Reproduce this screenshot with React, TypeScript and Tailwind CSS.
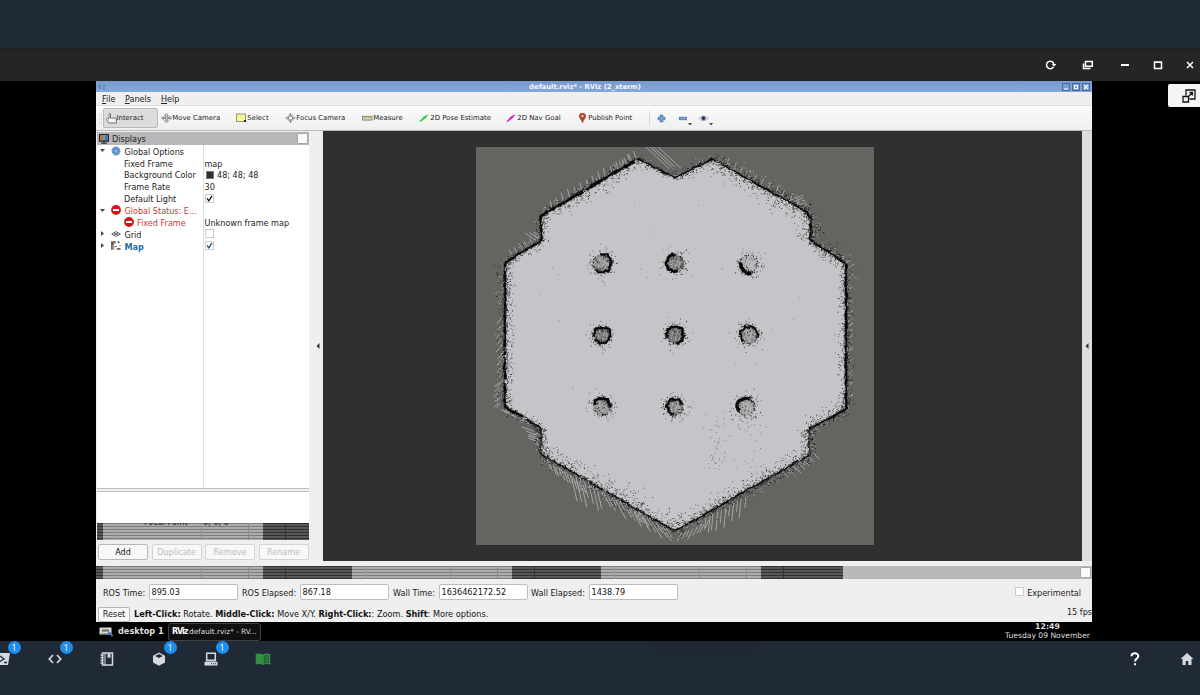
import React from "react";

type Pt = [number, number];

function makeRandom(seed: number) {
  let s = seed;
  return () => {
    s = (s * 1664525 + 1013904223) >>> 0;
    return s / 4294967296;
  };
}
const rnd = makeRandom(4217);
const gauss = () => (rnd() + rnd() + rnd() + rnd() - 2) * 1.1;

// Map coordinates are local to the 398 x 398 occupancy grid.
const outline: Pt[] = [
  [162, 12], [199, 31], [236, 12], [331, 65], [335, 72], [334, 93], [370, 117],
  [370, 262], [333, 282], [333, 308], [199, 384], [65, 307], [65, 281],
  [29, 260], [29, 116], [65, 94], [65, 69],
];
// per edge: stroke, inner spread, outer spread, density
const edges: [number, number, number, number][] = [
  [1.5, 4, 4, 3.5], [1.6, 4, 6, 5], [1.4, 10, 8, 9], [2.2, 10, 6, 12], [2, 10, 9, 12], [2.2, 6, 8, 9],
  [2.4, 6, 6, 6.5], [1.8, 9, 5, 8], [0.3, 6, 5, 13], [1.5, 9, 6, 9], [1.1, 11, 7, 9], [0.8, 6, 5, 11],
  [2.3, 4, 5, 6], [2.3, 7, 7, 7], [2.1, 5, 5, 6], [2.2, 5, 5, 8], [2.8, 8, 5, 6.5],
];
const px = (x: number, y: number, s = 1) => `M${x.toFixed(1)} ${y.toFixed(1)}h${s}v${s}h-${s}z`;

let black = "";
let gray = "";
let light = "";
const walls: { d: string; w: number }[] = [];
outline.forEach((a, i) => {
  const b = outline[(i + 1) % outline.length];
  const [w, inn, out, dens] = edges[i];
  const dx = b[0] - a[0];
  const dy = b[1] - a[1];
  const len = Math.hypot(dx, dy);
  const nx = -dy / len;
  const ny = dx / len;
  const steps = Math.max(2, Math.round(len / 4));
  let x0 = a[0];
  let y0 = a[1];
  for (let k = 1; k <= steps; k++) {
    const t = k / steps;
    const x1 = a[0] + dx * t + gauss() * 0.6;
    const y1 = a[1] + dy * t + gauss() * 0.6;
    if (rnd() > 0.08) {
      walls.push({
        d: `M${x0.toFixed(1)} ${y0.toFixed(1)}L${x1.toFixed(1)} ${y1.toFixed(1)}`,
        w: Number((w * (0.55 + rnd() * 0.7)).toFixed(2)),
      });
    }
    x0 = x1;
    y0 = y1;
  }
  for (let k = 0; k < len * 1.6; k++) {
    const t = rnd();
    const o = gauss() * (1.2 + w * 0.35);
    black += px(a[0] + dx * t + nx * o - 0.5, a[1] + dy * t + ny * o - 0.5);
  }
  for (let k = 0; k < len * dens * 0.45; k++) {
    const t = rnd();
    const g = gauss();
    const o = g > 0 ? g * inn : g * out;
    const x = a[0] + dx * t + nx * o;
    const y = a[1] + dy * t + ny * o;
    const r = rnd();
    if (r < 0.34) black += px(x, y, 0.9);
    else if (g < 0 && r < 0.75) light += px(x, y);
    else gray += px(x, y);
  }
});

// center, radius, arc start/end in degrees, arc width, fill opacity
const pillars: [number, number, number, number, number, number, number][] = [
  [126, 116, 9, -100, 130, 2, 0.45], [199, 116, 8.5, 70, 275, 2.4, 0.6], [273, 117, 9, 75, 195, 3, 0.15],
  [126, 188, 8, -190, 150, 1.9, 0.75], [199, 188, 8.5, -200, 80, 2.1, 0.8], [273, 188, 8.5, -225, 25, 1.6, 0.4],
  [126, 260, 8.5, -165, 10, 2.4, 0.4], [199, 260, 8, 100, 340, 1.9, 0.5], [270, 260, 9, 150, 300, 2.7, 0.3],
];
const arcs = pillars.map(([cx, cy, r, s, e, w, o]) => {
  let d = "";
  for (let q = s; q <= e; q += 14) {
    const a = (q * Math.PI) / 180;
    const rr = r + gauss() * 1.1;
    d += `${d ? "L" : "M"}${(cx + Math.cos(a) * rr).toFixed(1)} ${(cy + Math.sin(a) * rr).toFixed(1)}`;
  }
  for (let k = 0; k < 60; k++) {
    const a = ((s + rnd() * (e - s)) * Math.PI) / 180;
    const rr = r + gauss() * 1.8;
    black += px(cx + Math.cos(a) * rr - 0.5, cy + Math.sin(a) * rr - 0.5, 1.1);
  }
  for (let k = 0; k < 40; k++) {
    const a = rnd() * Math.PI * 2;
    black += px(cx + Math.cos(a) * (r + gauss()) - 0.5, cy + Math.sin(a) * (r + gauss()) - 0.5, 0.9);
  }
  for (let k = 0; k < 110; k++) {
    const a = rnd() * Math.PI * 2;
    const rr = r + gauss() * 5 + (rnd() < 0.15 ? 5 : 0);
    const p = px(cx + Math.cos(a) * rr, cy + Math.sin(a) * rr, 0.9);
    if (rnd() < 0.35) black += p;
    else gray += p;
  }
  return { d, w, cx, cy, r, o };
});
for (let k = 0; k < 55; k++) gray += px(225 + rnd() * 65, 262 + rnd() * 62, 0.8);
for (let k = 0; k < 30; k++) gray += px(242 + gauss() * 7, 278 + rnd() * 45, 0.8);
for (let k = 0; k < 25; k++) gray += px(60 + rnd() * 280, 50 + rnd() * 270, 0.8);

// x, y, step x, step y, ray dx, ray dy, count, jitter
const rays: [number, number, number, number, number, number, number, number][] = [
  [170, 0, 3, -1, 27, 25, 4, 3], [327, 47, 0, 3, -22, 9, 6, 4], [49, 86, 4, -1, 14, 9, 4, 4],
  [36, 108, 5, -3, -4, -7, 7, 4], [75, 60, 6, -3.5, -2, -8, 14, 4], [342, 102, 5, 3, 8, -5, 7, 5],
  [26, 170, 0, 7, -7, 8, 13, 4], [40, 266, 4, 2, -17, -4, 8, 6], [58, 284, 2, 3, -14, -5, 6, 5],
  [70, 312, 3, 2, 4, 12, 13, 5], [95, 327, 4, 1.5, 7, 30, 7, 7], [126, 344, 4, 2, 13, 24, 10, 9],
  [157, 362, 4, 2, 16, 26, 9, 9], [205, 386, 4, -2, -6, 12, 8, 8], [229, 371, 4, -2.2, -2, 20, 11, 8],
  [305, 323, 5, -3, 10, 9, 7, 5], [23, 235, 0, 5, -6, 5, 5, 4], [140, 22, 5, -2.8, -3, -7, 5, 3],
  [250, 17, 7, 4, 3, -7, 11, 4], [373, 130, 0, 12, 4, -3, 11, 3],
];
let rayPath = "";
rays.forEach(([x, y, sx, sy, rx, ry, n, j]) => {
  for (let k = 0; k < n; k++) {
    const f = 1 - (rnd() * j) / 15;
    rayPath += `M${(x + sx * k + rnd()).toFixed(1)} ${(y + sy * k + rnd()).toFixed(1)}l${(rx * f).toFixed(1)} ${(ry * f).toFixed(1)}`;
  }
});

function OccupancyMap() {
  return (
    <svg width="398" height="398" viewBox="0 0 398 398" className="block overflow-hidden bg-[#636561]">
      <path d={`M${outline.map((p) => p.join(" ")).join("L")}z`} fill="#c6c4c8" />
      <path d={rayPath} stroke="#b5b5b5" strokeWidth="0.9" fill="none" opacity="0.9" />
      {arcs.map((p, i) => (
        <g key={i}>
          <circle cx={p.cx} cy={p.cy} r={p.r} fill="#666864" opacity={p.o} />
          <path d={`M${p.cx - 4} ${p.cy + 4}l2-9M${p.cx} ${p.cy + 6}l3-11M${p.cx + 4} ${p.cy + 5}l1-7`} stroke="#c6c4c8" strokeWidth=".6" />
        </g>
      ))}
      <path d={light} fill="#b9b9b9" opacity="0.8" />
      <path d={gray} fill="#4d4d4b" opacity="0.75" />
      <path d={black} fill="#080808" opacity="0.85" />
      {walls.map((l, i) => (
        <path key={i} d={l.d} stroke="#050505" strokeWidth={l.w} fill="none" />
      ))}
      {arcs.map((p, i) => (
        <path key={i} d={p.d} stroke="#070707" strokeWidth={p.w} fill="none" />
      ))}
    </svg>
  );
}

function Gear() {
  return (
    <svg width="10" height="10" viewBox="0 0 10 10">
      <circle cx="5" cy="5" r="3.9" fill="#6d9fd3" stroke="#4779b3" strokeWidth="1.1" strokeDasharray="1.3 .7" />
      <circle cx="5" cy="5" r="1.6" fill="#9fc3e8" stroke="#4b80bc" strokeWidth=".7" />
    </svg>
  );
}
function StopIcon() {
  return (
    <svg width="10" height="10" viewBox="0 0 10 10">
      <circle cx="5" cy="5" r="4.9" fill="#d5151b" />
      <rect x="2" y="4" width="6" height="2" fill="#fff" />
    </svg>
  );
}
function Monitor() {
  return (
    <svg width="10" height="10" viewBox="0 0 10 10">
      <rect width="10" height="7.7" rx=".6" fill="#222" />
      <rect x="1" y="1" width="2.7" height="5.5" fill="#d9676d" />
      <rect x="3.7" y="1" width="2.7" height="5.5" fill="#58c06c" />
      <rect x="6.4" y="1" width="2.6" height="5.5" fill="#6e66d9" />
      <path d="M4 7h2v1.7h2v1H2v-1h2z" fill="#333" />
    </svg>
  );
}
function GridIcon() {
  return (
    <svg width="10" height="10" viewBox="0 0 10 10" fill="none" stroke="#555" strokeWidth=".9">
      <path d="M.7 5L5 2.6 9.3 5 5 7.4zM2.8 3.8l4.3 2.4M7.2 3.8L2.8 6.2" />
    </svg>
  );
}
function MapIcon() {
  return (
    <svg width="11" height="10" viewBox="0 0 11 10" fill="#666">
      <path d="M0 0h5v2H3v2H2v5H0zM7 0h2v2H7zM4 5h2v1H4zM6 7h4v2H6zM9 4h1v1H9z" />
      <path d="M2 4h2v5H2z" fill="#bbb" />
    </svg>
  );
}

function Check({ on, blue }: { on?: boolean; blue?: boolean }) {
  return (
    <span className="flex h-[9px] w-[9px] shrink-0 items-center justify-center border border-[#cccccc] bg-white">
      {on && (
        <svg width="7" height="7" viewBox="0 0 7 7" fill="none" stroke={blue ? "#1e4f86" : "#111"} strokeWidth="1.3">
          <path d="M1 3.4L2.8 5.8 6 .8" />
        </svg>
      )}
    </span>
  );
}

type Row = {
  arrow?: "down" | "right";
  icon?: React.ReactNode;
  pad: string;
  label: string;
  tone?: string;
  swatch?: boolean;
  text?: string;
  check?: React.ReactNode;
};
const rows: Row[] = [
  { arrow: "down", icon: <Gear />, pad: "pl-[5px]", label: "Global Options" },
  { pad: "pl-[18px]", label: "Fixed Frame", text: "map" },
  { pad: "pl-[18px]", label: "Background Color", swatch: true, text: "48; 48; 48" },
  { pad: "pl-[18px]", label: "Frame Rate", text: "30" },
  { pad: "pl-[18px]", label: "Default Light", check: <Check on /> },
  { arrow: "down", icon: <StopIcon />, pad: "pl-[5px]", label: "Global Status: E...", tone: "text-[#c8383d]" },
  { icon: <StopIcon />, pad: "pl-[17.5px]", label: "Fixed Frame", tone: "text-[#c8383d]", text: "Unknown frame map" },
  { arrow: "right", icon: <GridIcon />, pad: "pl-[5px]", label: "Grid", check: <Check /> },
  { arrow: "right", icon: <MapIcon />, pad: "pl-[5px]", label: "Map", tone: "font-bold text-[#1b6dab]", check: <Check on blue /> },
];

function Tree() {
  return (
    <div className="h-[344px] border-b border-[#c0c0c0] bg-white bg-[linear-gradient(to_right,transparent_106px,#dddddd_106px,#dddddd_107px,transparent_107px)]">
      {rows.map((r, i) => (
        <div key={i} className="flex h-[11.86px] items-center">
          <div className="flex w-[107px] items-center">
            <span className="flex w-[8px] shrink-0 justify-end">
              {r.arrow && (
                <svg width="5" height="5" viewBox="0 0 5 5" className="shrink-0" fill="#444">
                  <path d={r.arrow === "down" ? "M0 1h5L2.5 4z" : "M1 0v5L4 2.5z"} />
                </svg>
              )}
            </span>
            <span className={`ml-px flex items-center whitespace-nowrap ${r.pad} ${r.tone ?? ""}`}>
              {r.icon && <span className="mr-[3px] flex w-[10.5px] shrink-0">{r.icon}</span>}
              <span className="pt-[1.6px]">{r.label}</span>
            </span>
          </div>
          <div className="flex items-center pl-[0.5px]">
            {r.swatch && <span className="mr-[3px] ml-[1.5px] h-[8px] w-[8px] border border-[#777] bg-[#303030]" />}
            {r.text && <span className="pt-[1.6px]">{r.text}</span>}
            {r.check}
          </div>
        </div>
      ))}
    </div>
  );
}

function Glitch({ parts }: { parts: [boolean, string][] }) {
  return (
    <div className="flex h-full w-full">
      {parts.map(([dark, w], i) => (
        <div
          key={i}
          className={`${w} ${
            dark
              ? "bg-[linear-gradient(to_right,transparent_22px,#333_22px,#333_23px,transparent_23px),repeating-linear-gradient(to_bottom,#303030_0px,#303030_1px,#5c5c5c_1px,#545454_3px)]"
              : "bg-[linear-gradient(to_right,transparent_14px,#999_14px,#999_15px,transparent_15px,transparent_98px,#8e8e8e_98px,#8e8e8e_99px,transparent_99px,transparent_145px,#888_145px,#888_146px,transparent_146px),repeating-linear-gradient(to_bottom,#7c7c7c_0px,#7c7c7c_1px,#b2b2b2_1px,#a8a8a8_3px)]"
          }`}
        />
      ))}
    </div>
  );
}

function PanelButton({ label, off }: { label: string; off?: boolean }) {
  return (
    <div
      className={`flex h-[16px] w-[50px] items-center justify-center rounded-[2px] border bg-[#f8f8f8] pt-px ${
        off ? "border-[#d4d4d4] text-[#bdbdbd]" : "border-[#b7b7b7] text-[#111]"
      }`}
    >
      {label}
    </div>
  );
}

function Displays() {
  return (
    <div className="w-[213px] shrink-0 pl-px">
      <div className="mt-px flex h-[13px] items-center bg-[#b9b7b9] pl-[2px]">
        <Monitor />
        <span className="ml-[3px] flex-1 pt-[1.5px]">Displays</span>
        <span className="mr-[1px] h-[11px] w-[11px] rounded-[1px] border border-[#a5a5a5] bg-[#fbfbfb]" />
      </div>
      <Tree />
      <div className="mt-[2px] h-[32px] border-t border-[#bdbdbd] bg-white" />
      <div className="h-[17px]">
        <div className="h-[17px] w-[212px]">
          <Glitch parts={[[true, "w-[6px]"], [false, "w-[160px]"], [true, "w-[46px]"]]} />
        </div>
        <div className="relative -mt-[17px] ml-[47px] flex h-[3px] w-[85px] justify-between overflow-hidden text-[#222]">
          <span className="-mt-[5px] leading-[8px]">Focal Point</span>
          <span className="-mt-[5px] leading-[8px]">0; 0; 0</span>
        </div>
      </div>
      <div className="mt-[4px] flex gap-[3.5px] pl-px">
        <PanelButton label="Add" />
        <PanelButton label="Duplicate" off />
        <PanelButton label="Remove" off />
        <PanelButton label="Rename" off />
      </div>
    </div>
  );
}

const tools: { w: string; label: string; icon: React.ReactNode }[] = [
  {
    w: "w-[75px]",
    label: "Move Camera",
    icon: (
      <svg width="11" height="10" viewBox="0 0 11 10" fill="#ddd" stroke="#777" strokeWidth=".8">
        <path d="M5.5.5l2 2H6.3v2H9v-1l1.500 1.500L9 6.500v-1H6.300v2.200h1.200l-2 2-2-2h1.200V5.500H2v1L.5 5 2 3.500v1h2.700v-2H3.500z" />
      </svg>
    ),
  },
  {
    w: "w-[49px]",
    label: "Select",
    icon: (
      <svg width="11" height="10" viewBox="0 0 11 10">
        <rect x=".5" y="1" width="9" height="7.500" fill="#f7f1a0" stroke="#81815d" strokeWidth=".8" />
        <path d="M8 7h2v2H8z" fill="#222" />
      </svg>
    ),
  },
  {
    w: "w-[77px]",
    label: "Focus Camera",
    icon: (
      <svg width="11" height="10" viewBox="0 0 11 10" fill="none" stroke="#888" strokeWidth="1">
        <path d="M5.500 .5L10 5 5.500 9.500 1 5z" fill="#ddd" strokeWidth=".7" strokeDasharray="1.500 .6" />
        <circle cx="5.500" cy="5" r="2.200" fill="#f5f5f5" />
        <path d="M5.500 0v3.500M5.500 6.500V10M.5 5H4M7 5h3.500" />
      </svg>
    ),
  },
  {
    w: "w-[57px]",
    label: "Measure",
    icon: (
      <svg width="11" height="10" viewBox="0 0 11 10">
        <rect x=".5" y="3.300" width="9.500" height="3.800" fill="#d5d2a4" stroke="#85836d" strokeWidth=".8" />
        <path d="M2.500 3.500v1.500M4.500 3.500v1.500M6.500 3.500v1.500M8.500 3.500v1.500" stroke="#85836d" strokeWidth=".5" />
      </svg>
    ),
  },
  {
    w: "w-[87px]",
    label: "2D Pose Estimate",
    icon: (
      <svg width="11" height="10" viewBox="0 0 11 10" fill="#23d63a">
        <path d="M.5 8.200L4 4.500l1-.9L9.500 1 6.800 5l-1.300 1L1.500 9z" />
      </svg>
    ),
  },
  {
    w: "w-[71px]",
    label: "2D Nav Goal",
    icon: (
      <svg width="11" height="10" viewBox="0 0 11 10" fill="#d91bc0">
        <path d="M.5 8.200L4 4.500l1-.9L9.500 1 6.800 5l-1.300 1L1.500 9z" />
      </svg>
    ),
  },
  {
    w: "w-[72px]",
    label: "Publish Point",
    icon: (
      <svg width="11" height="10" viewBox="0 0 11 10">
        <path d="M5.500 0C3.500 0 2.300 1.400 2.300 3.200c0 2.300 2.500 3.400 3.200 6.600.7-3.200 3.200-4.300 3.200-6.600C8.700 1.400 7.500 0 5.500 0z" fill="#b84224" stroke="#77301c" strokeWidth=".5" />
        <circle cx="5.500" cy="3" r="1.200" fill="#f2c9b5" />
      </svg>
    ),
  },
];

function Caret() {
  return (
    <svg width="4" height="3" viewBox="0 0 4 3" className="mt-[13px] shrink-0">
      <path d="M0 0h4L2 2.500z" fill="#444" />
    </svg>
  );
}

function Toolbar() {
  return (
    <div className="flex h-[25px] items-center border-b border-[#bcbcbc] bg-gradient-to-b from-[#fbfbfb] to-[#efefef] text-[6.92px] text-[#222]">
      <div className="ml-[3px] h-[11px] w-[3px] border-x border-dotted border-[#ccc]" />
      <div className="ml-px flex h-[20px] w-[55px] items-center rounded-[2px] border border-[#bababa] bg-[#dcdcdc] pl-[1.5px]">
        <svg width="11" height="11" viewBox="0 0 11 11" fill="#f5f5f5" stroke="#555" strokeWidth=".8">
          <path d="M3 6V1.300c0-1 1.500-1 1.500 0V5h4.700c.8 0 1.200.4 1.200 1v4H3L.5 6.500C.2 5.500 1.500 5 2 5.500z" />
        </svg>
        <span className="pt-[1.5px]">Interact</span>
      </div>
      <div className="ml-[3px] flex">
        {tools.map((t) => (
          <div key={t.label} className={`flex items-center whitespace-nowrap ${t.w}`}>
            {t.icon}
            <span className="pt-[1.5px] pl-[0.3px]">{t.label}</span>
          </div>
        ))}
      </div>
      <div className="flex h-[14px] items-center border-l border-[#d4d4d4] pl-[7px]">
        <svg width="9" height="9" viewBox="0 0 9 9" className="mr-[13px]">
          <path d="M3.200 1h2.600v2.200H8v2.600H5.800V8H3.200V5.800H1V3.200h2.200z" fill="#74a3d6" stroke="#3e6ba0" strokeWidth=".7" />
        </svg>
        <svg width="8" height="9" viewBox="0 0 8 9">
          <rect x=".4" y="3.200" width="7.200" height="2.600" fill="#74a3d6" stroke="#3e6ba0" strokeWidth=".7" />
        </svg>
        <span className="flex pl-[1px]">
          <Caret />
        </span>
        <svg width="11" height="9" viewBox="0 0 11 9" className="ml-[6px]">
          <path d="M.5 4.500Q5.500-.5 10.500 4.500 5.500 9 .5 4.500z" fill="#eceef3" stroke="#aaa" strokeWidth=".7" />
          <circle cx="5.500" cy="4.300" r="2.200" fill="#49659a" />
          <circle cx="5.500" cy="4.300" r="1" fill="#111" />
        </svg>
        <Caret />
      </div>
    </div>
  );
}

function TimeField({ label, labelW, value }: { label: string; labelW: string; value: string }) {
  return (
    <>
      <span className={`pt-[1.5px] whitespace-nowrap ${labelW}`}>{label}</span>
      <span className="flex h-[16px] w-[89px] items-center rounded-[2px] border border-[#bdbdbd] bg-white pt-px pl-[1.5px] text-[8.15px] text-[#111]">
        {value}
      </span>
    </>
  );
}

function RvizWindow() {
  return (
    <div className="flex h-[541px] flex-col bg-[#efefef] text-[8.08px] leading-none text-[#222]">
      <div className="flex h-[11px] items-center bg-gradient-to-b from-[#799bce] to-[#82a8dc] px-[2px]">
        <span className="flex w-[32px]">
          <svg width="8" height="6" viewBox="0 0 8 6" className="opacity-60" fill="none" stroke="#4b6488" strokeWidth=".8">
            <path d="M1 1v4M1 1h2v2H1l2 2M5 1h2L5 5h2" />
          </svg>
        </span>
        <div className="flex-1 pt-px pr-[22px] text-center text-[6.83px] font-bold text-[#f4f7fc]">default.rviz* - RViz (2_xterm)</div>
        <div className="flex w-[28px] gap-[2px]">
          {["M1 5h4", "M1.500 1.500h3v3h-3z", "M1 1l4 4M5 1L1 5"].map((d) => (
            <svg key={d} width="8" height="8" viewBox="-1 -1 8 8" fill="none" stroke="#edf3fc" strokeWidth="1.200">
              <rect x="-.5" y="-.5" width="7" height="7" fill="#7b9fd3" stroke="#41659b" strokeWidth=".9" />
              <path d={d} />
            </svg>
          ))}
        </div>
      </div>
      <div className="flex h-[14px] items-center border-b border-[#dedede] pt-[2px] pl-[6px]">
        {[["F", "ile", "w-[23px]"], ["P", "anels", "w-[36px]"], ["H", "elp", "w-[30px]"]].map(([a, b, w]) => (
          <span key={b} className={w}>
            <span className="underline underline-offset-1">{a}</span>
            {b}
          </span>
        ))}
      </div>
      <Toolbar />
      <div className="flex h-[430px]">
        <Displays />
        <div className="flex w-[14px] items-center justify-center">
          <svg width="4" height="6" viewBox="0 0 4 6" className="ml-[4px]">
            <path d="M3.500 0v6L.5 3z" fill="#333" />
          </svg>
        </div>
        <div className="flex w-[759px] bg-[#303030] pt-[16px] pl-[153px]">
          <OccupancyMap />
        </div>
        <div className="flex w-[10px] items-center justify-center bg-[#dddddd]">
          <svg width="4" height="6" viewBox="0 0 4 6">
            <path d="M3.500 0v6L.5 3z" fill="#333" />
          </svg>
        </div>
      </div>
      <div className="mt-[5px] flex h-[13px] bg-[#bab8ba]">
        <div className="w-[747px]">
          <Glitch
            parts={[
              [true, "w-[7px]"], [false, "w-[160px]"], [true, "w-[89px]"], [false, "w-[160px]"],
              [true, "w-[89px]"], [false, "w-[160px]"], [true, "w-[82px]"],
            ]}
          />
        </div>
        <span className="mt-px mr-[1px] ml-auto h-[11px] w-[11px] rounded-[1px] border border-[#a8a8a8] bg-[#fbfbfb]" />
      </div>
      <div className="mt-[5px] flex h-[16px] items-center pl-[7px]">
        <TimeField label="ROS Time:" labelW="w-[46px]" value="895.03" />
        <TimeField label="ROS Elapsed:" labelW="w-[58px] ml-[4px]" value="867.18" />
        <TimeField label="Wall Time:" labelW="w-[46px] ml-[4px]" value="1636462172.52" />
        <TimeField label="Wall Elapsed:" labelW="w-[58px] ml-[3px]" value="1438.79" />
        <span className="mr-[11px] ml-auto flex items-center gap-[3px]">
          <Check />
          <span className="pt-[1.5px]">Experimental</span>
        </span>
      </div>
      <div className="mt-[6px] flex h-[16px] items-center pl-[2px]">
        <span className="mr-[4px] flex h-[15px] w-[32px] items-center justify-center rounded-[2px] border border-[#b7b7b7] bg-[#fafafa] pt-px">
          Reset
        </span>
        <span className="pt-px text-[8.16px] whitespace-pre text-[#111]">
          <b>Left-Click:</b> Rotate. <b>Middle-Click:</b> Move X/Y. <b>Right-Click:</b>: Zoom. <b>Shift</b>: More options.
        </span>
        <span className="mb-[4px] ml-auto">15 fps</span>
      </div>
    </div>
  );
}

function Taskbar() {
  return (
    <div className="flex h-[19px] items-center bg-black pl-[3px] leading-none text-[#dedede]">
      <svg width="14" height="11" viewBox="0 0 14 11">
        <path d="M.5 1.500h12v7H.5z" fill="#d9d9d9" />
        <path d="M3 3.500h7v2H3z" fill="#666" />
        <path d="M2 7h8v1H2z" fill="#999" />
        <path d="M9.500 6l4 4" stroke="#4779bd" strokeWidth="1.800" />
      </svg>
      <b className="ml-[5px] w-[50px] text-[8.2px]">desktop 1</b>
      <div className="flex h-[18px] w-[93px] items-center rounded-[3px] border border-[#414141] bg-[#101010] pl-[3px] text-[7.3px] whitespace-nowrap">
        <b className="w-[17px] text-[8px] tracking-[-1.1px] text-white">RViz</b>
        default.rviz* - RV...
      </div>
      <div className="mr-[2px] ml-auto flex flex-col items-center gap-[1px]">
        <b className="text-[7.8px]">12:49</b>
        <span className="text-[7.62px]">Tuesday 09 November</span>
      </div>
    </div>
  );
}

const dock: { badge?: boolean; icon: React.ReactNode }[] = [
  {
    badge: true,
    icon: (
      <svg width="16" height="14" viewBox="0 0 16 14">
        <path d="M3 1h12l-2 12H1z" fill="#d5d9df" />
        <path d="M5 4l4 3-5 3M9 10.500h3" stroke="#202a38" strokeWidth="1.300" fill="none" />
      </svg>
    ),
  },
  {
    badge: true,
    icon: (
      <svg width="14" height="14" viewBox="0 0 14 14" fill="none" stroke="#d5d9df" strokeWidth="1.700">
        <path d="M5 3L1.300 7 5 11M9 3l3.700 4L9 11" />
      </svg>
    ),
  },
  {
    icon: (
      <svg width="14" height="14" viewBox="0 0 14 14">
        <path d="M2.500 1h10v12h-10z" fill="none" stroke="#d5d9df" strokeWidth="1.500" />
        <path d="M5 1v12" stroke="#d5d9df" />
        <path d="M7.500 1.500h3v5L9 5 7.500 6.500z" fill="#d5d9df" />
        <path d="M.5 3h3M.5 5.700h3M.5 8.300h3M.5 11h3" stroke="#d5d9df" strokeWidth="1.300" />
      </svg>
    ),
  },
  {
    badge: true,
    icon: (
      <svg width="14" height="14" viewBox="0 0 14 14">
        <path d="M7 .5l6 3.200v6.700L7 13.700 1 10.400V3.700z" fill="#d5d9df" />
        <path d="M7 2l3.800 2L7 6 3.200 4z" fill="#202a38" />
      </svg>
    ),
  },
  {
    badge: true,
    icon: (
      <svg width="14" height="14" viewBox="0 0 14 14">
        <path d="M2.700 1.300h8.600v7H2.700z" fill="none" stroke="#d5d9df" strokeWidth="1.500" />
        <path d="M1.500 9.500h11l1 1v3H.5v-3z" fill="#d5d9df" />
        <path d="M7 11.700h1M9 11.700h1M11 11.700h1" stroke="#202a38" />
      </svg>
    ),
  },
  {
    icon: (
      <svg width="16" height="14" viewBox="0 0 16 14">
        <path d="M.7 2Q5 1 8 2.500 11 1 15.300 2v10.500Q11 11.500 8 13 5 11.500.7 12.500z" fill="#329140" />
        <path d="M8.800 3.800Q11 2.800 14 3.200v7.800Q11 10.500 8.800 11.800z" fill="#26603a" />
        <path d="M10 5h3.200M10 7h3.200M10 9h3.200" stroke="#329140" strokeWidth="1" />
      </svg>
    ),
  },
];

function Dock() {
  return (
    <div className="flex h-[54px] items-start bg-[#202a36]">
      <div className="-ml-[23.5px] flex">
        {dock.map((d, i) => (
          <div key={i} className="relative flex h-[36px] w-[52px] items-center justify-center">
            {d.icon}
            {d.badge && (
              <span className="absolute top-[0px] left-[31px] flex h-[13px] w-[13px] items-center justify-center rounded-full bg-[#1e8dec] font-['Open_Sans'] text-[9px] leading-none text-white">
                1
              </span>
            )}
          </div>
        ))}
      </div>
      <div className="ml-[364.5px] h-[10px] w-[106px] bg-[#1e2733]" />
      <div className="ml-auto flex h-[36px] items-center">
        <svg width="10" height="14" viewBox="0 0 10 14" className="mr-[40px]">
          <path d="M1.500 4.200C1.500.4 8.300.3 8.300 4.200c0 2.200-3.300 2.700-3.300 5.300" stroke="#fff" strokeWidth="2" fill="none" />
          <path d="M4 11.300h2v2H4z" fill="#fff" />
        </svg>
        <svg width="14" height="14" viewBox="0 0 14 14" className="mr-[6px]">
          <path d="M7 1l6.500 6h-2v6H8.300V9H5.700v4H2.500V7h-2z" fill="#d5d9df" />
        </svg>
      </div>
    </div>
  );
}

const chrome: { w: string; icon: React.ReactNode }[] = [
  {
    w: "w-[40px]",
    icon: (
      <>
        <path d="M9.800 5A3.700 3.700 0 1 0 9.300 8" />
        <path d="M7.800 5h4.400L10 7.800z" fill="#fff" stroke="none" />
      </>
    ),
  },
  { w: "w-[36px]", icon: <path d="M3.500 2.500h6.800v4.800H3.500zM1.500 4.500v5h7" /> },
  { w: "w-[38px]", icon: <path d="M2 6h8" strokeWidth="2" /> },
  { w: "w-[28px]", icon: <path d="M2.500 3h7v6.500h-7zM2.500 3.300h7" /> },
  { w: "w-[37px]", icon: <path d="M3 3l6 6M9 3L3 9" /> },
];

export default function App() {
  return (
    <div className="flex h-[695px] w-[1200px] flex-col overflow-hidden bg-black font-['DejaVu_Sans',sans-serif]">
      <div className="h-[49px] border-b border-[#18202a] bg-[#202a36]" />
      <div className="flex h-[32px] items-center justify-end bg-[#252525]">
        <div className="-mr-[8.5px] flex">
          {chrome.map((c, i) => (
            <div key={i} className={`flex justify-center ${c.w}`}>
              <svg width="12" height="12" viewBox="0 0 12 12" fill="none" stroke="#fff" strokeWidth="1.500">
                {c.icon}
              </svg>
            </div>
          ))}
        </div>
      </div>
      <div className="flex h-[560px]">
        <div className="w-[96px]" />
        <div className="w-[996px]">
          <RvizWindow />
          <Taskbar />
        </div>
        <div className="flex w-[108px] justify-end pt-[3px]">
          <div className="flex h-[23px] w-[32px] items-center justify-center rounded-l-[2px] bg-[#f5f5f5] pl-[9px]">
            <svg width="14" height="14" viewBox="0 0 14 14" fill="none" stroke="#111" strokeWidth="1.300">
              <path d="M4 6.500V1h9v9H7.500M1 7.500h5.500V13H1zM6.500 7.500L10.500 3.500M7.500 3.500h3v3" />
            </svg>
          </div>
        </div>
      </div>
      <Dock />
    </div>
  );
}
